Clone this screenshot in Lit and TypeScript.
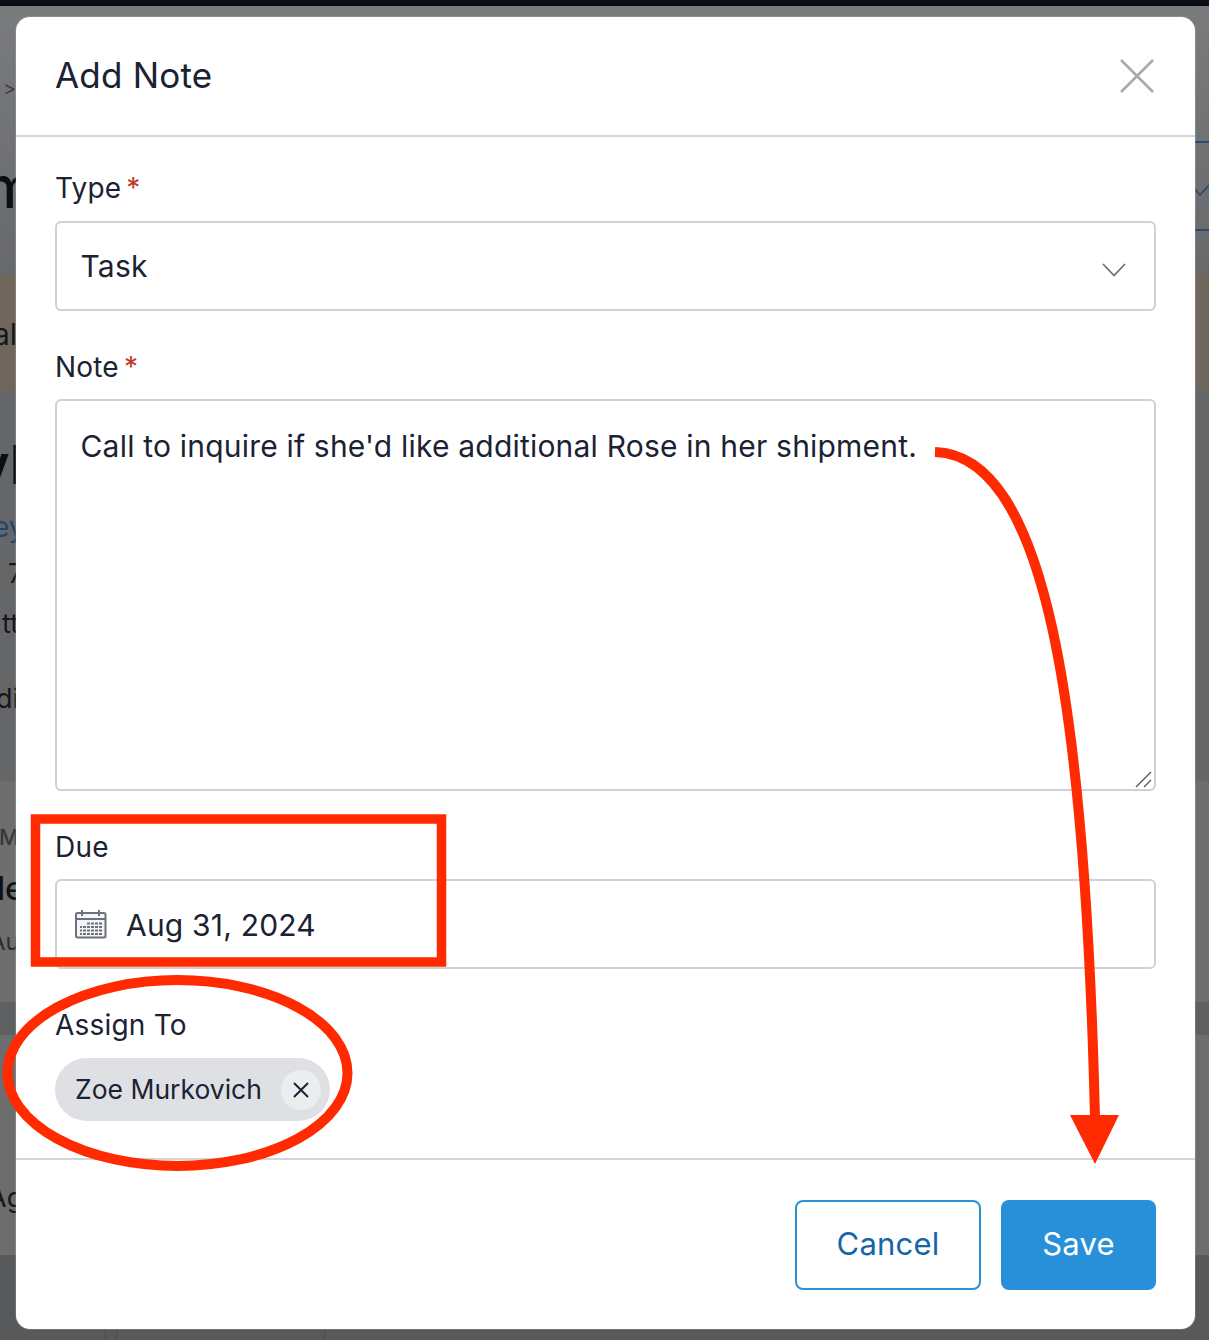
import { LitElement, html, css, svg } from "lit";
import { customElement } from "lit/decorators.js";

const bands = [
  { y: 6, h: 269, c: "linear-gradient(#7a7b7d, #68696b)" },
  { y: 275, h: 115, c: "#6f675c" },
  { y: 390, h: 391, c: "#656668" },
  { y: 781, h: 221, c: "#6e6e6e" },
  { y: 1002, h: 33, c: "#5f6062" },
  { y: 1035, h: 220, c: "#6d6d6d" },
  { y: 1255, h: 85, c: "#58595b" },
];

const crumbs = [
  { t: ">", x: 3, y: 76, s: 20, c: "#3f4144", w: 400 },
  { t: "m", x: -16, y: 153, s: 58, c: "#0c0e12", w: 500 },
  { t: "al", x: -7, y: 316, s: 30, c: "#15171a", w: 400 },
  { t: "vl", x: -22, y: 433, s: 54, c: "#0c0e12", w: 600 },
  { t: "ey", x: -7, y: 511, s: 28, c: "#1f466c", w: 400 },
  { t: "7", x: 8, y: 558, s: 27, c: "#15171a", w: 400 },
  { t: "tt", x: 2, y: 608, s: 27, c: "#15171a", w: 400 },
  { t: "di", x: -4, y: 683, s: 27, c: "#15171a", w: 400 },
  { t: "M", x: -1, y: 824, s: 22, c: "#35373b", w: 500 },
  { t: "le", x: -3, y: 870, s: 32, c: "#0f1114", w: 500 },
  { t: "Au", x: -11, y: 928, s: 24, c: "#2a2c30", w: 400 },
  { t: "Ag", x: -12, y: 1182, s: 27, c: "#15171a", w: 400 },
];

const seams = [105, 116, 324];

@customElement("app-root")
export class AppRoot extends LitElement {
  static styles = css`
    :host {
      display: block;
      position: relative;
      width: 1209px;
      height: 1340px;
      overflow: hidden;
      background: #656668;
      font-family: Inter, "Liberation Sans", sans-serif;
      color: #1a2233;
    }
    .backdrop { position: absolute; inset: 0; overflow: hidden; }
    .topbar { position: absolute; left: 0; right: 0; top: 0; height: 6px; background: #0a0d14; }
    .band { position: absolute; left: 0; right: 0; }
    .seam { position: absolute; top: 1255px; bottom: 0; width: 1px; background: #4c4d4f; }
    .crumb { position: absolute; line-height: 1.2; white-space: nowrap; }
    .rline { position: absolute; left: 1195px; right: 0; height: 2px; background: #2a4c6e; }
    .rcheck { position: absolute; left: 1195px; top: 182px; }
    .modal {
      position: absolute;
      left: 16px;
      top: 17px;
      width: 1179px;
      height: 1312px;
      background: #fff;
      border-radius: 14px;
      box-shadow: 0 0 0 1px rgba(255, 255, 255, 0.14);
      display: flex;
      flex-direction: column;
    }
    .head {
      height: 118px;
      box-sizing: content-box;
      border-bottom: 2px solid #d3d5da;
      display: flex;
      align-items: center;
      justify-content: space-between;
      padding: 0 41px 0 39px;
    }
    .title { font-size: 35px; letter-spacing: 0.2px; padding-bottom: 2px; }
    .close { display: block; margin-bottom: 1px; }
    .body { flex: 1; padding: 31px 39px 0 39px; }
    .field { margin-bottom: 36px; }
    .label {
      height: 40px;
      line-height: 41px;
      font-size: 28px;
      letter-spacing: 0.2px;
      margin-bottom: 12px;
      display: flex;
      gap: 5px;
    }
    .label.wide { margin-bottom: 13px; }
    .star { color: #c0392b; line-height: 40px; }
    .box {
      box-sizing: border-box;
      border: 2px solid #cfd1d7;
      border-radius: 6px;
      font-size: 30px;
      letter-spacing: 0.2px;
      position: relative;
    }
    .select, .date { height: 90px; display: flex; align-items: center; }
    .select { padding: 0 28px 0 23.5px; justify-content: space-between; }
    .chev { margin-top: 8px; }
    .date { padding: 2px 0 0 18px; gap: 19px; }
    .date svg { margin-top: -2px; }
    .area { height: 392px; padding: 25px 23.5px; line-height: 40px; }
    .handle { position: absolute; right: 1px; bottom: 0; }
    .chip {
      display: inline-flex;
      align-items: center;
      height: 63px;
      width: 275px;
      box-sizing: border-box;
      padding: 0 9px 0 20px;
      justify-content: space-between;
      border-radius: 32px;
      background: #dfe0e4;
      font-size: 26.5px;
      line-height: 61px;
    }
    .chip-x {
      width: 40px;
      height: 40px;
      border-radius: 50%;
      background: #ecedef;
      display: flex;
      align-items: center;
      justify-content: center;
    }
    .foot {
      height: 171px;
      box-sizing: border-box;
      border-top: 2px solid #d3d5da;
      display: flex;
      justify-content: flex-end;
      align-items: center;
      gap: 20px;
      padding: 0 39px 0 0;
    }
    .btn {
      box-sizing: border-box;
      height: 90px;
      border-radius: 8px;
      font-size: 31px;
      letter-spacing: 0.2px;
      padding-bottom: 2px;
      display: flex;
      align-items: center;
      justify-content: center;
    }
    .cancel { width: 186px; border: 2px solid #2b90d9; color: #1565a8; }
    .save { width: 155px; background: #2890d9; color: #fff; }
    .marks { position: absolute; left: 0; top: 0; pointer-events: none; }
  `;

  render() {
    return html`
      <div class="backdrop">
        <div class="topbar"></div>
        ${bands.map(
          (b) => html`<div class="band" style="top:${b.y}px;height:${b.h}px;background:${b.c}"></div>`
        )}
        ${seams.map((x) => html`<div class="seam" style="left:${x}px"></div>`)}
        ${crumbs.map(
          (c) => html`<div
            class="crumb"
            style="left:${c.x}px;top:${c.y}px;font-size:${c.s}px;color:${c.c};font-weight:${c.w}"
          >${c.t}</div>`
        )}
        <div class="rline" style="top:141px"></div>
        <div class="rline" style="top:229px"></div>
        <svg class="rcheck" width="14" height="16" viewBox="0 0 14 16">
          <path d="M0 7 L5 13 L14 3" fill="none" stroke="#2a4c6e" stroke-width="1.6" />
        </svg>
      </div>

      <div class="modal">
        <div class="head">
          <div class="title">Add Note</div>
          <svg class="close" width="34" height="34" viewBox="0 0 34 34">
            <path d="M1 1 L33 33 M33 1 L1 33" stroke="#a5a8ae" stroke-width="2.6" fill="none" />
          </svg>
        </div>
        <div class="body">
          <div class="field">
            <div class="label wide">Type<span class="star">*</span></div>
            <div class="box select">
              <span>Task</span>
              <svg class="chev" width="24" height="14" viewBox="0 0 24 14">
                <path d="M1 1 L12 12.5 L23 1" fill="none" stroke="#6b6f7a" stroke-width="1.8" />
              </svg>
            </div>
          </div>
          <div class="field">
            <div class="label">Note<span class="star">*</span></div>
            <div class="box area">
              Call to inquire if she'd like additional Rose in her shipment.
              <svg class="handle" width="18" height="18" viewBox="0 0 18 18">
                <path d="M1 16 L16 1 M9 16 L16 9" stroke="#55585f" stroke-width="1.4" fill="none" />
              </svg>
            </div>
          </div>
          <div class="field">
            <div class="label">Due</div>
            <div class="box date">
              <svg width="32" height="30" viewBox="0 0 32 30">
                ${svg`
                  <rect x="1" y="4" width="29.5" height="24.5" rx="1.5" fill="#f4f5f6" stroke="#6d717b" stroke-width="2" />
                  <path d="M1 10 H30" stroke="#6d717b" stroke-width="2" />
                  <path d="M7 1 V7 M24 1 V7" stroke="#6d717b" stroke-width="2" />
                  <path d="M12 14.5 H27 M5 18 H27 M5 21.5 H27 M5 25 H27" stroke="#6d717b" stroke-width="2.2" />
                  <path d="M7.5 13 V27 M11.5 13 V27 M15.5 13 V27 M19.5 13 V27 M23.5 13 V27" stroke="#f4f5f6" stroke-width="1" />
                `}
              </svg>
              <span>Aug 31, 2024</span>
            </div>
          </div>
          <div class="field">
            <div class="label wide">Assign To</div>
            <div class="chip">
              <span>Zoe Murkovich</span>
              <span class="chip-x">
                <svg width="16" height="16" viewBox="0 0 16 16">
                  <path d="M1 1 L15 15 M15 1 L1 15" stroke="#1a2233" stroke-width="2" fill="none" />
                </svg>
              </span>
            </div>
          </div>
        </div>
        <div class="foot">
          <div class="btn cancel">Cancel</div>
          <div class="btn save">Save</div>
        </div>
      </div>

      <svg class="marks" width="1209" height="1340" viewBox="0 0 1209 1340">
        <rect x="35.5" y="819" width="406" height="143" fill="none" stroke="#ff2a00" stroke-width="9.5" />
        <ellipse cx="177.5" cy="1073" rx="170" ry="93" fill="none" stroke="#ff2a00" stroke-width="10" />
        <path d="M935 452 C1045 455 1085 700 1095 1118" fill="none" stroke="#ff2a00" stroke-width="10" />
        <path d="M1070 1115 H1119 L1095 1164 Z" fill="#ff2a00" />
      </svg>
    `;
  }
}
